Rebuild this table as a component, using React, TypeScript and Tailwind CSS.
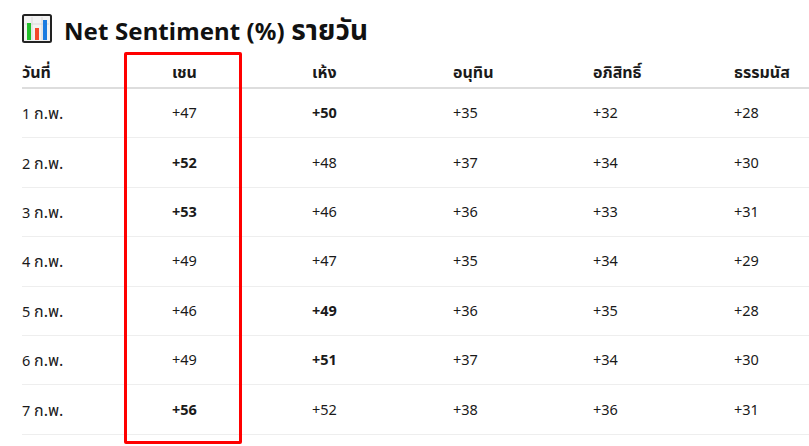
import React from 'react';

type Row = { day: number; values: number[]; bold: number | null };

const headers = ['วันที่', 'เชน', 'เห้ง', 'อนุทิน', 'อภิสิทธิ์', 'ธรรมนัส'];

const rows: Row[] = [
  { day: 1, values: [47, 50, 35, 32, 28], bold: 1 },
  { day: 2, values: [52, 48, 37, 34, 30], bold: 0 },
  { day: 3, values: [53, 46, 36, 33, 31], bold: 0 },
  { day: 4, values: [49, 47, 35, 34, 29], bold: null },
  { day: 5, values: [46, 49, 36, 35, 28], bold: 1 },
  { day: 6, values: [49, 51, 37, 34, 30], bold: 1 },
  { day: 7, values: [56, 52, 38, 36, 31], bold: 0 },
];

const cols = 'grid grid-cols-[150px_140px_141px_140px_141px_1fr]';

function ChartIcon() {
  return (
    <svg width="30" height="29" viewBox="0 0 30 29" className="shrink-0">
      <rect x="1" y="1" width="28" height="27" rx="1.5" fill="#f2f2f2" stroke="#222" strokeWidth="2" />
      <line x1="10" y1="3" x2="10" y2="26" stroke="#d8d8d8" strokeWidth="1" />
      <line x1="20" y1="3" x2="20" y2="26" stroke="#d8d8d8" strokeWidth="1" />
      <line x1="3" y1="10" x2="27" y2="10" stroke="#d8d8d8" strokeWidth="1" />
      <rect x="5" y="9" width="4" height="17" fill="#22c02a" />
      <rect x="13" y="14" width="4" height="12" fill="#f4472a" />
      <rect x="21" y="6" width="4" height="20" fill="#1a7be0" />
    </svg>
  );
}

export default function App() {
  return (
    <div className="relative w-[809px] h-[446px] overflow-hidden bg-white text-[#1a1a1a] font-['Noto_Sans','Noto_Sans_Thai','Tahoma',sans-serif]">
      <div className="pl-[22px] pt-[14px]">
        <div className="flex items-center gap-3 h-[29px]">
          <ChartIcon />
          <h1 className="text-[24px] font-bold leading-none text-[#111] tracking-[0.1px]">
            Net Sentiment (%) <span className="text-[28px]">รายวัน</span>
          </h1>
        </div>

        <div className="mt-[10px]">
          <div className={`${cols} h-[36px] pt-[3px] items-center border-b-2 border-[#dddddd] text-[16px] font-bold leading-none`}>
            {headers.map((h) => (
              <div key={h}>{h}</div>
            ))}
          </div>
          {rows.map((r) => (
            <div
              key={r.day}
              className={`${cols} h-[49.4px] items-center border-b border-[#eeeeee] text-[14.5px]`}
            >
              <div>
                {r.day} <span className="text-[16px]">ก.พ.</span>
              </div>
              {r.values.map((v, i) => (
                <div key={i} className={r.bold === i ? 'font-bold' : ''}>
                  +{v}
                </div>
              ))}
            </div>
          ))}
        </div>
      </div>

      {/* highlight box around the first candidate */}
      <div className="absolute left-[124px] top-[52px] w-[118px] h-[392px] border-[3px] border-[#ff0000] rounded-[2px]" />
    </div>
  );
}
